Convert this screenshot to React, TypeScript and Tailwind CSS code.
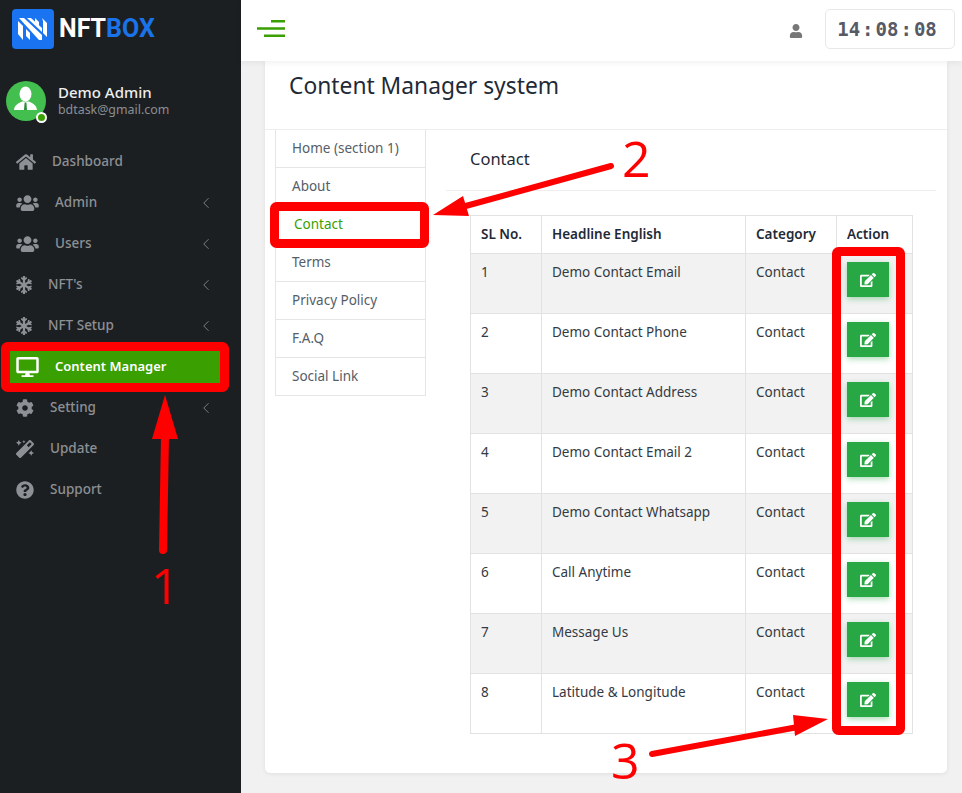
import React from 'react';
import {
  FaHome,
  FaUsers,
  FaSnowflake,
  FaDesktop,
  FaCog,
  FaMagic,
  FaQuestionCircle,
  FaEdit,
  FaUser,
} from 'react-icons/fa';
import { ChevronLeft } from 'lucide-react';

const menu = [
  { label: 'Dashboard', icon: FaHome, iconClass: 'w-[20px] h-[18px]', arrow: false },
  { label: 'Admin', icon: FaUsers, iconClass: 'w-[23px] h-[18px]', arrow: true },
  { label: 'Users', icon: FaUsers, iconClass: 'w-[23px] h-[18px]', arrow: true },
  { label: "NFT's", icon: FaSnowflake, iconClass: 'w-[16px] h-[18px]', arrow: true },
  { label: 'NFT Setup', icon: FaSnowflake, iconClass: 'w-[16px] h-[18px]', arrow: true },
  { label: 'Content Manager', icon: FaDesktop, iconClass: 'w-[23px] h-[20px]', arrow: false, active: true },
  { label: 'Setting', icon: FaCog, iconClass: 'w-[18px] h-[18px]', arrow: true },
  { label: 'Update', icon: FaMagic, iconClass: 'w-[18px] h-[18px]', arrow: false },
  { label: 'Support', icon: FaQuestionCircle, iconClass: 'w-[18px] h-[18px]', arrow: false },
];

const tabs = ['Home (section 1)', 'About', 'Contact', 'Terms', 'Privacy Policy', 'F.A.Q', 'Social Link'];

const rows = [
  'Demo Contact Email',
  'Demo Contact Phone',
  'Demo Contact Address',
  'Demo Contact Email 2',
  'Demo Contact Whatsapp',
  'Call Anytime',
  'Message Us',
  'Latitude & Longitude',
];

const Logo = () => (
  <svg width="42" height="40" viewBox="0 0 42 40" className="shrink-0">
    <rect width="42" height="40" rx="4" fill="#1a73f0" />
    <g fill="#fff">
      <path d="M6 12 L11 17 L11 31 L6 25 Z" />
      <path d="M7 9 L12 9 L30 26 L30 31 L27 31 Z" />
      <path d="M15 9 L19 9 L30 19 L30 23 Z" />
      <path d="M14 20 L18 24 L18 31 L14 27 Z" />
      <path d="M23 9 L27 13 L27 17 L23 13 Z" />
      <path d="M30 9 L35 14 L35 28 L31 24 L31 12 Z" />
    </g>
  </svg>
);

const Avatar = () => (
  <div className="relative w-10 h-10 shrink-0">
    <svg width="40" height="40" viewBox="0 0 40 40">
      <circle cx="20" cy="20" r="20" fill="#43bf4f" />
      <ellipse cx="19.5" cy="13" rx="6" ry="7.5" fill="#fff" />
      <path d="M8 29 C8.5 24 12 22.5 16 20.5 L23 20.5 C27 22.5 30.5 24 31 29 Z" fill="#fff" />
      <path d="M18.6 21.5 H20.4 L21 29 H18 Z" fill="#2e8f3a" />
    </svg>
    <span className="absolute right-[-0.5px] bottom-[-1.5px] w-[11px] h-[11px] rounded-full bg-[#3a9f00] border-2 border-white" />
  </div>
);

const Annotations = () => (
  <>
    <svg width="962" height="793" viewBox="0 0 962 793" className="absolute left-0 top-0 z-20 pointer-events-none">
      <g fill="none" stroke="#ff0000" strokeWidth="9">
        <rect x="5.5" y="346.5" width="219" height="41" rx="2" />
        <rect x="274.5" y="206.5" width="150" height="37" rx="2" />
        <rect x="836.5" y="251.5" width="64" height="479" rx="2" />
      </g>
      <g stroke="#ff0000" strokeLinecap="round" fill="none">
        <path d="M163 550 L165 436" strokeWidth="8" />
        <path d="M611 166 L462 207" strokeWidth="6" />
        <path d="M652 754 L798 727" strokeWidth="6" />
      </g>
      <g fill="#ff0000">
        <path d="M165 395 L178 439 L152 439 Z" />
        <path d="M433 215 L463 196 L469 216 Z" />
        <path d="M828 719 L793 715 L795 736 Z" />
      </g>
    </svg>
    <span className="absolute z-20 left-[151px] top-[551px] text-[50px] leading-[68px] text-[#ff0000] font-['Open_Sans',sans-serif]">1</span>
    <span className="absolute z-20 left-[622px] top-[124px] text-[50px] leading-[68px] text-[#ff0000] font-['Open_Sans',sans-serif]">2</span>
    <span className="absolute z-20 left-[611px] top-[726px] text-[50px] leading-[68px] text-[#ff0000] font-['Open_Sans',sans-serif]">3</span>
  </>
);

export default function App() {
  return (
    <div className="relative flex w-[962px] h-[793px] overflow-hidden bg-[#f1f1f1] font-['Noto_Sans',sans-serif] text-[14px]">
      <aside className="w-[241px] shrink-0 bg-[#1c1f22] flex flex-col">
        <div className="flex gap-[5px] pl-3 pt-[9px] h-[61px] items-start">
          <Logo />
          <span className="font-['Roboto',sans-serif] font-bold text-[25px] leading-[40px] text-white">
            NFT<span className="text-[#1a73e8]">BOX</span>
          </span>
        </div>
        <div className="flex items-center gap-3 pl-[6px] mt-5">
          <Avatar />
          <div className="mb-[3px]">
            <div className="text-[15px] leading-[20px] font-medium text-[#eeeeee]">Demo Admin</div>
            <div className="text-[12.4px] leading-[16px] text-[#8b8e92]">bdtask@gmail.com</div>
          </div>
        </div>
        <nav className="mt-[20px]">
          {menu.map(item => {
            const Icon = item.icon;
            return (
              <div
                key={item.label}
                className={`flex items-center gap-4 h-[41px] ml-2 mr-[14px] pl-2 pr-[12px] ${
                  item.active ? 'bg-[#3a9f00] text-white font-semibold text-[13px]' : 'text-[#8d9094] font-medium text-[13.5px]'
                }`}
              >
                <Icon className={`shrink-0 ${item.iconClass}`} />
                <span>{item.label}</span>
                {item.arrow && <ChevronLeft size={18} strokeWidth={1} className="ml-auto text-[#9a9da0]" />}
              </div>
            );
          })}
        </nav>
      </aside>

      <main className="flex-1 min-w-0 flex flex-col">
        <header className="relative z-10 h-[61px] shrink-0 bg-white shadow-[0_2px_6px_rgba(0,0,0,0.06)] flex items-center pl-4 pr-[7px]">
          <svg width="28" height="18" viewBox="0 0 28 18" className="mb-[3px]">
            <path d="M14 1.2 H28 M0 8.5 H28 M7 15.8 H28" stroke="#3a9f00" strokeWidth="2.4" />
          </svg>
          <FaUser size={14} className="ml-auto mr-[22px] text-[#777777]" />
          <div className="w-[130px] h-[40px] mb-[3px] border border-[#e8e8e8] rounded-[5px] flex items-center justify-center gap-[2px] pr-[6px] text-[#555a66] font-['DejaVu_Sans_Mono',monospace] font-bold text-[19px]">
            <span>14</span>
            <span>:</span>
            <span>08</span>
            <span>:</span>
            <span>08</span>
          </div>
        </header>

        <div className="flex-1 pl-6 pr-[15px]">
          <section className="h-[712px] bg-white rounded-b-[5px] shadow-[0_1px_4px_rgba(0,0,0,0.08)]">
            <div className="h-[69px] border-b border-[#eeeeee] pl-6 pt-[6px]">
              <h1 className="text-[22.8px] leading-[38px] text-[#1f2a37]">Content Manager system</h1>
            </div>
            <div className="flex pl-[10px]">
              <ul className="w-[151px] shrink-0 border-x border-[#e5e5e5] self-start">
                {tabs.map(tab => (
                  <li
                    key={tab}
                    className={`h-[38px] flex items-center text-[13.5px] border-b border-[#e5e5e5] ${
                      tab === 'Contact' ? 'pl-[18px] text-[#3a9f00]' : 'pl-4 text-[#555e68]'
                    }`}
                  >
                    {tab}
                  </li>
                ))}
              </ul>
              <div className="flex-1 min-w-0 pl-5 pr-[11px]">
                <h2 className="h-[61px] border-b border-[#eeeeee] pl-6 pt-[16px] text-[16.5px] leading-[26px] text-[#1f2a37]">Contact</h2>
                <table className="mt-[24px] ml-6 w-[442px] table-fixed border-collapse text-[#333a44] text-[13.5px]">
                  <colgroup>
                    <col className="w-[71px]" />
                    <col className="w-[204px]" />
                    <col className="w-[91px]" />
                    <col className="w-[76px]" />
                  </colgroup>
                  <thead>
                    <tr className="h-[38px] text-left font-semibold text-[#1f2a37]">
                      {['SL No.', 'Headline English', 'Category', 'Action'].map(h => (
                        <th key={h} className="border border-[#e2e2e2] px-[10px] font-semibold">{h}</th>
                      ))}
                    </tr>
                  </thead>
                  <tbody>
                    {rows.map((row, i) => (
                      <tr key={row} className={`h-[60px] ${i % 2 === 0 ? 'bg-[#f2f2f2]' : 'bg-white'}`}>
                        <td className="border border-[#e2e2e2] px-[10px] pt-[8px] align-top">{i + 1}</td>
                        <td className="border border-[#e2e2e2] px-[10px] pt-[8px] align-top">{row}</td>
                        <td className="border border-[#e2e2e2] px-[10px] pt-[8px] align-top">Contact</td>
                        <td className="border border-[#e2e2e2] px-[10px] pt-[8px] align-top">
                          <button className="w-[42px] h-[35px] bg-[#28a745] text-white flex items-center justify-center shadow-[0_2px_6px_rgba(40,167,69,0.4)]">
                            <FaEdit size={16} />
                          </button>
                        </td>
                      </tr>
                    ))}
                  </tbody>
                </table>
              </div>
            </div>
          </section>
        </div>
      </main>

      <Annotations />
    </div>
  );
}
